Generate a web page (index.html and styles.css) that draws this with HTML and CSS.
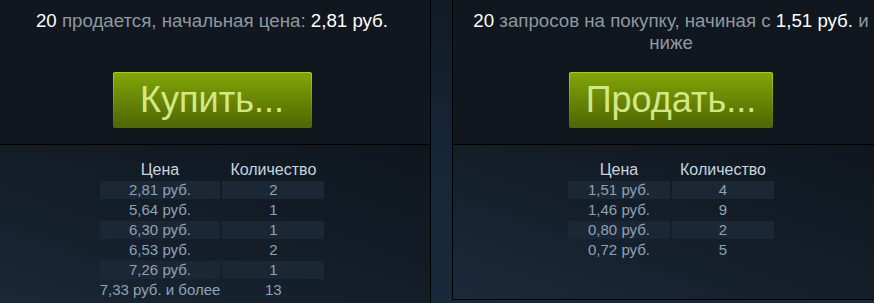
FILE: index.html
```html
<!DOCTYPE html>
<html lang="ru">
<head>
<meta charset="utf-8">
<link rel="stylesheet" href="styles.css">
</head>
<body>
<div class="orders">
  <div class="panel">
    <div class="panel-top">
      <div class="header"><span class="hl">20</span> продается, начальная цена: <span class="hl">2,81 руб.</span></div>
      <a class="btn btn-buy"><span>Купить...</span></a>
    </div>
    <div class="panel-bottom">
      <table class="book book-sell">
        <tr><th>Цена</th><th>Количество</th></tr>
        <tr class="odd"><td>2,81 руб.</td><td>2</td></tr>
        <tr><td>5,64 руб.</td><td>1</td></tr>
        <tr class="odd"><td>6,30 руб.</td><td>1</td></tr>
        <tr><td>6,53 руб.</td><td>2</td></tr>
        <tr class="odd"><td>7,26 руб.</td><td>1</td></tr>
        <tr><td>7,33 руб. и более</td><td>13</td></tr>
      </table>
    </div>
  </div>
  <div class="panel">
    <div class="panel-top">
      <div class="header"><span class="hl">20</span> запросов на покупку, начиная с <span class="hl">1,51 руб.</span> и ниже</div>
      <a class="btn btn-sell"><span>Продать...</span></a>
    </div>
    <div class="panel-bottom">
      <table class="book book-buy">
        <tr><th>Цена</th><th>Количество</th></tr>
        <tr class="odd"><td>1,51 руб.</td><td>4</td></tr>
        <tr><td>1,46 руб.</td><td>9</td></tr>
        <tr class="odd"><td>0,80 руб.</td><td>2</td></tr>
        <tr><td>0,72 руб.</td><td>5</td></tr>
      </table>
    </div>
  </div>
</div>
</body>
</html>
```
FILE: styles.css
```css
html, body {
  margin: 0;
  padding: 0;
  height: 100%;
}
body {
  background: linear-gradient(to bottom, #121a24 0%, #16273a 55%, #18293c 100%);
  font-family: "Liberation Sans", Arial, sans-serif;
  overflow: hidden;
}
.orders {
  display: flex;
  align-items: flex-start;
  gap: 21px;
  margin: -1px 0 0 -7px;
}
.panel {
  flex: 0 0 438px;
  width: 438px;
  box-sizing: border-box;
  border: 1px solid #000;
}
.panel-top {
  height: 144px;
  border-bottom: 1px solid #000;
  background: #10171f;
  display: flex;
  flex-direction: column;
  align-items: center;
}
.header {
  box-sizing: border-box;
  width: 100%;
  height: 61px;
  padding: 10px 12px 0;
  font-size: 18.7px;
  line-height: 22px;
  color: #8f98a0;
  text-align: center;
}
.hl {
  color: #ffffff;
}
.btn {
  display: block;
  margin-top: 11px;
  padding: 1px;
  border-radius: 2px;
  background: linear-gradient(to bottom, #a4d007 5%, #536904 95%);
  cursor: pointer;
}
.btn span {
  display: block;
  height: 54px;
  line-height: 53px;
  border-radius: 2px;
  background: linear-gradient(to bottom, #7fa208 5%, #536904 95%);
  color: #d2e885;
  font-size: 36px;
  text-align: center;
}
.btn-buy span { width: 197px; }
.btn-sell span { width: 202px; }
.panel-bottom {
  padding: 14px 0 38px;
  background: linear-gradient(20deg, #1b2a3b 0%, #141e29 50%, #0f161e 100%);
}
.book {
  margin: 0 auto;
  border-spacing: 2px;
  font-size: 15px;
}
.book th {
  height: 18px;
  padding: 0;
  line-height: 18px;
  font-weight: normal;
  font-size: 16px;
  color: #c6d4df;
  white-space: nowrap;
}
.book td {
  height: 18px;
  padding: 0;
  line-height: 18px;
  text-align: center;
  color: #8ea2b6;
  white-space: nowrap;
}
.book tr.odd td {
  background: #1c2735;
}
.book-sell th:first-child { width: 120px; }
.book-sell th:last-child { width: 102px; }
.book-buy th { width: 102px; }
```
